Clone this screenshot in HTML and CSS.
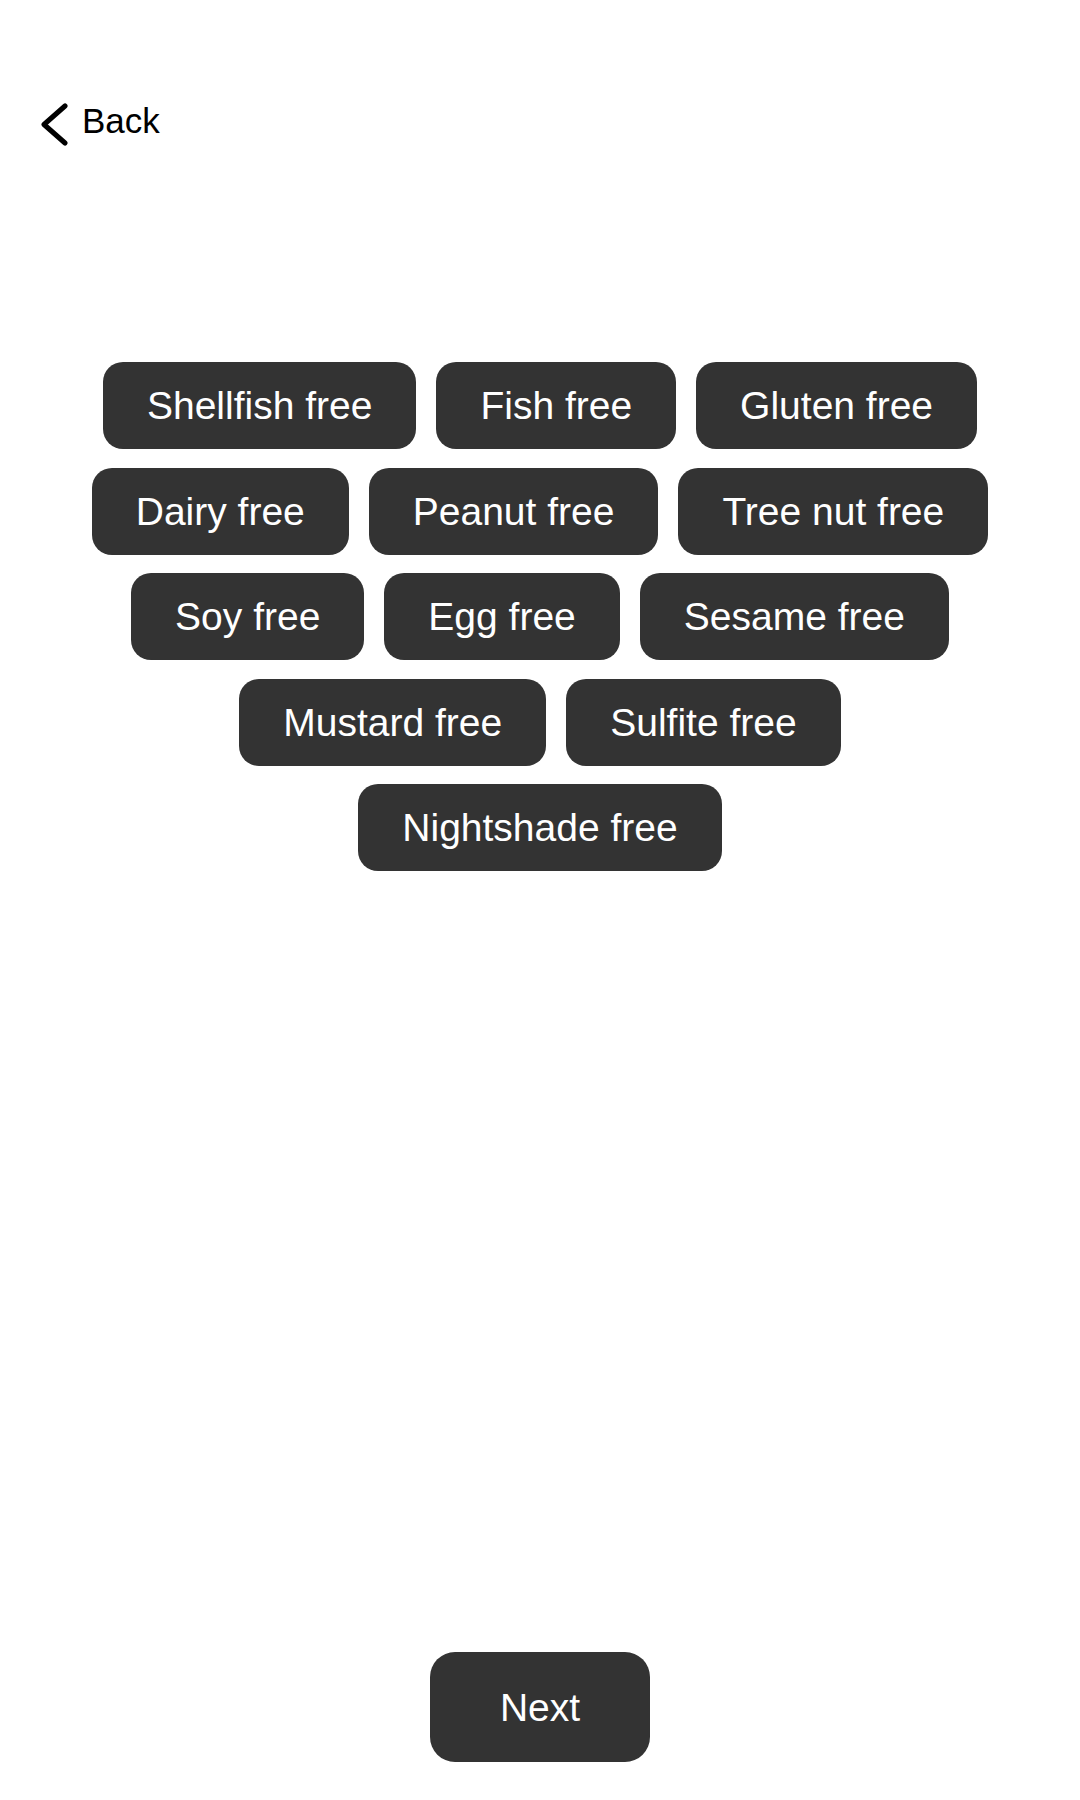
FILE: index.html
```html
<!DOCTYPE html>
<html lang="en">
<head>
<meta charset="utf-8">
<title>Diet preferences</title>
<link rel="stylesheet" href="styles.css">
</head>
<body>
<div class="page">
  <header class="header">
    <button class="back" type="button">
      <svg class="back-icon" width="30" height="46" viewBox="0 0 30 46" aria-hidden="true">
        <polyline points="24,4 3,22.5 24,41" fill="none" stroke="#000" stroke-width="5" stroke-linecap="round" stroke-linejoin="round"/>
      </svg>
      <span class="back-label">Back</span>
    </button>
  </header>

  <main class="options">
    <button class="pill" type="button">Shellfish free</button>
    <button class="pill" type="button">Fish free</button>
    <button class="pill" type="button">Gluten free</button>
    <button class="pill" type="button">Dairy free</button>
    <button class="pill" type="button">Peanut free</button>
    <button class="pill" type="button">Tree nut free</button>
    <button class="pill" type="button">Soy free</button>
    <button class="pill" type="button">Egg free</button>
    <button class="pill" type="button">Sesame free</button>
    <button class="pill" type="button">Mustard free</button>
    <button class="pill" type="button">Sulfite free</button>
    <button class="pill" type="button">Nightshade free</button>
  </main>

  <footer class="footer">
    <button class="next" type="button">Next</button>
  </footer>
</div>
</body>
</html>
```

FILE: styles.css
```css
* {
  box-sizing: border-box;
}

html, body {
  margin: 0;
  padding: 0;
  background: #ffffff;
}

body {
  font-family: "Liberation Sans", Arial, sans-serif;
}

.page {
  min-height: 1800px;
  display: flex;
  flex-direction: column;
}

.header {
  padding: 101px 0 0 41px;
}

.back {
  display: flex;
  align-items: flex-start;
  gap: 11px;
  background: none;
  border: 0;
  padding: 0;
  margin: 0;
  cursor: pointer;
  font-family: inherit;
}

.back-icon {
  display: block;
  margin-top: 1px;
}

.back-label {
  font-size: 35px;
  line-height: 40px;
  color: #000;
}

.options {
  margin-top: 214px;
  padding: 0 70px;
  display: flex;
  flex-wrap: wrap;
  justify-content: center;
  gap: 18.5px 20px;
}

.pill {
  background: #333333;
  color: #ffffff;
  border: 0;
  border-radius: 20px;
  font-family: inherit;
  font-size: 39px;
  line-height: 45px;
  padding: 21px 44px;
  margin: 0;
  cursor: pointer;
}

.footer {
  margin-top: auto;
  display: flex;
  justify-content: center;
  padding-bottom: 38px;
}

.next {
  background: #333333;
  color: #ffffff;
  border: 0;
  border-radius: 25px;
  font-family: inherit;
  font-size: 39px;
  line-height: 45px;
  padding: 32.5px 70px;
  margin: 0;
  cursor: pointer;
}
```
